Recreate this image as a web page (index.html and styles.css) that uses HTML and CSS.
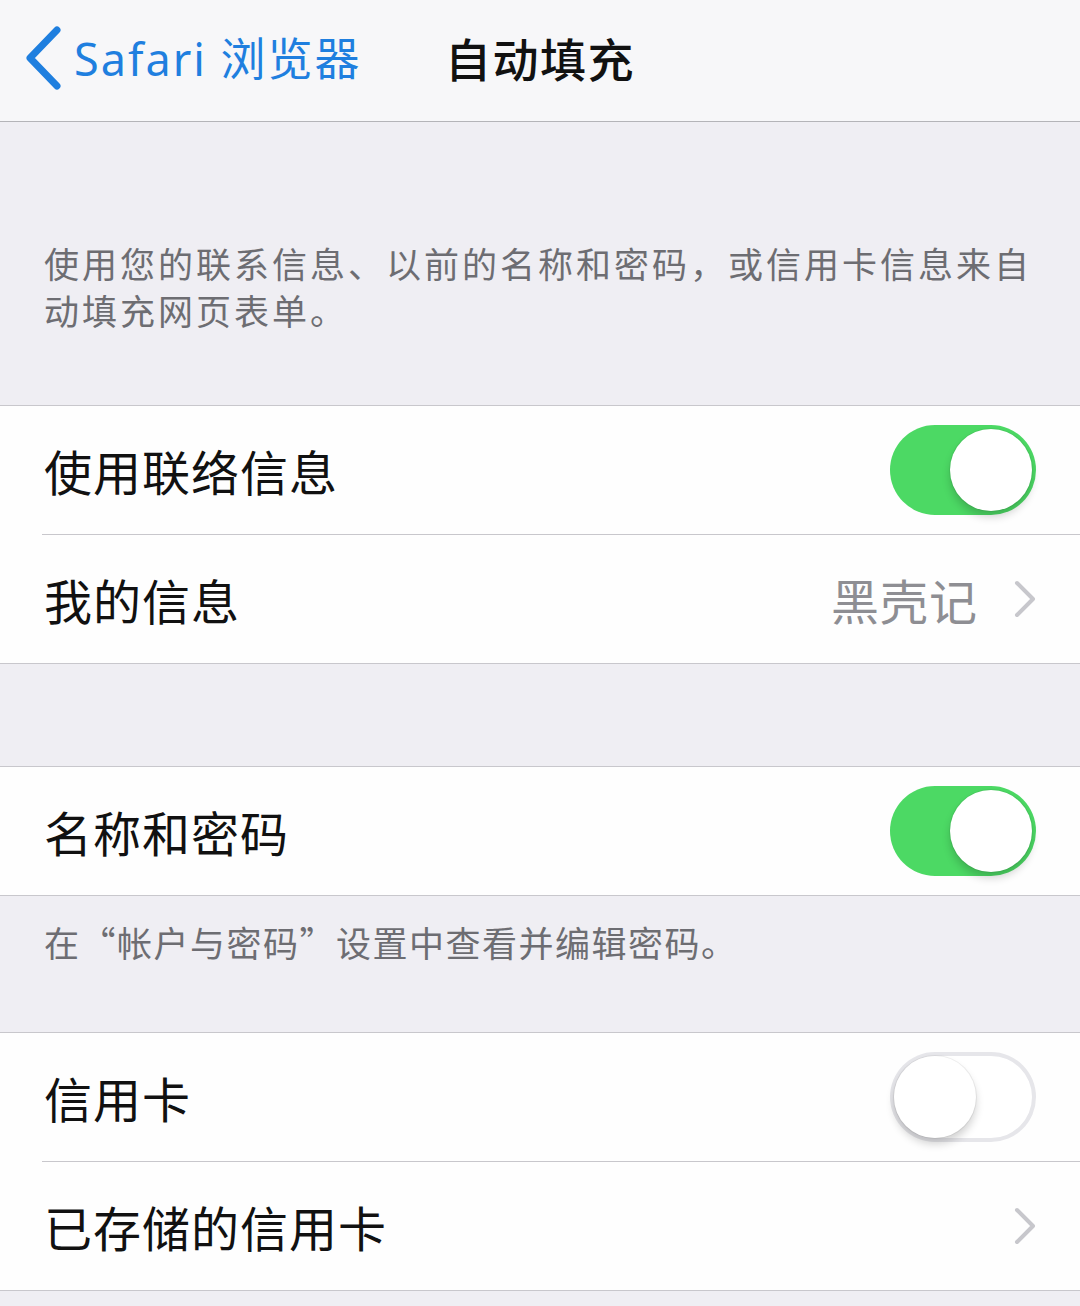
FILE: index.html
```html
<!DOCTYPE html>
<html lang="zh-CN">
<head>
    <meta charset="utf-8">
    <meta name="viewport" content="width=device-width, initial-scale=1.0">
    <title>自动填充</title>
    <link rel="stylesheet" href="styles.css">
</head>
<body>
    <header class="navbar">
        <a class="back" href="#">
            <svg class="back-icon" width="38" height="64" viewBox="0 0 38 64">
                <polyline points="33,4 6,32 33,60" fill="none" stroke="currentColor" stroke-width="7" stroke-linecap="round" stroke-linejoin="round"/>
            </svg>
            <span>Safari 浏览器</span>
        </a>
        <h1 class="title">自动填充</h1>
        <div></div>
    </header>

    <p class="note note-top">使用您的联系信息、以前的名称和密码，或信用卡信息来自动填充网页表单。</p>

    <section class="group">
        <div class="row">
            <span class="label">使用联络信息</span>
            <span class="switch on"><span class="knob"></span></span>
        </div>
        <div class="row">
            <span class="label">我的信息</span>
            <span class="value">黑壳记</span>
            <svg class="chevron" width="22" height="38" viewBox="0 0 22 38">
                <polyline points="3,3 19,19 3,35" fill="none" stroke="currentColor" stroke-width="4" stroke-linecap="round" stroke-linejoin="round"/>
            </svg>
        </div>
    </section>

    <div class="spacer"></div>

    <section class="group">
        <div class="row">
            <span class="label">名称和密码</span>
            <span class="switch on"><span class="knob"></span></span>
        </div>
    </section>

    <p class="note note-bottom">在“帐户与密码”设置中查看并编辑密码。</p>

    <section class="group">
        <div class="row">
            <span class="label">信用卡</span>
            <span class="switch"><span class="knob"></span></span>
        </div>
        <div class="row">
            <span class="label">已存储的信用卡</span>
            <svg class="chevron" width="22" height="38" viewBox="0 0 22 38">
                <polyline points="3,3 19,19 3,35" fill="none" stroke="currentColor" stroke-width="4" stroke-linecap="round" stroke-linejoin="round"/>
            </svg>
        </div>
    </section>
</body>
</html>
```

FILE: styles.css
```css
body {
    font-family: "Noto Sans", "Noto Sans CJK SC", sans-serif;
    margin: 0;
    background-color: #efeef3;
    color: #111111;
}

.navbar {
    display: grid;
    grid-template-columns: 1fr auto 1fr;
    align-items: center;
    height: 113px;
    padding-bottom: 8px;
    background-color: #f7f7f9;
    border-bottom: 1px solid #b4b4b8;
}

.back {
    display: flex;
    align-items: center;
    gap: 12px;
    padding-left: 24px;
    color: #1f7fdf;
    font-size: 45px;
    text-decoration: none;
    letter-spacing: 2px;
}

.back-icon {
    margin-top: 2px;
}

.title {
    margin: 0;
    font-size: 46px;
    font-weight: 500;
    letter-spacing: 1.5px;
}

.note {
    margin: 0;
    padding: 0 44px;
    font-size: 35px;
    line-height: 47px;
    letter-spacing: 3px;
    color: #6d6d72;
}

.note-top {
    padding-top: 119px;
    padding-bottom: 70px;
}

.note-bottom {
    padding-top: 22px;
    padding-bottom: 67px;
    font-family: "Noto Sans CJK SC", sans-serif;
    letter-spacing: 1.5px;
}

.group {
    background-color: #fefefe;
    border-top: 1px solid #c8c7cc;
    border-bottom: 1px solid #c8c7cc;
}

.row {
    display: flex;
    align-items: center;
    height: 128px;
    margin-left: 42px;
    padding-left: 2px;
    padding-right: 44px;
}

.row + .row {
    border-top: 1px solid #c8c7cc;
}

.label {
    flex: 1;
    font-size: 48px;
    letter-spacing: 1px;
}

.value {
    font-size: 48px;
    color: #8e8e93;
    margin-right: 36px;
    letter-spacing: 1px;
}

.chevron {
    color: #c7c7cc;
}

.spacer {
    height: 102px;
}

.switch {
    position: relative;
    width: 146px;
    height: 90px;
    border-radius: 45px;
    background-color: #ffffff;
    box-shadow: inset 0 0 0 4px #e6e6ea;
}

.switch.on {
    background-color: #4cd964;
    box-shadow: none;
}

.knob {
    position: absolute;
    top: 4px;
    left: 4px;
    width: 82px;
    height: 82px;
    border-radius: 50%;
    background-color: #ffffff;
    box-shadow: 0 6px 8px rgba(0, 0, 0, 0.18), 0 0 0 1px rgba(0, 0, 0, 0.06);
}

.switch.on .knob {
    left: 60px;
}
```
